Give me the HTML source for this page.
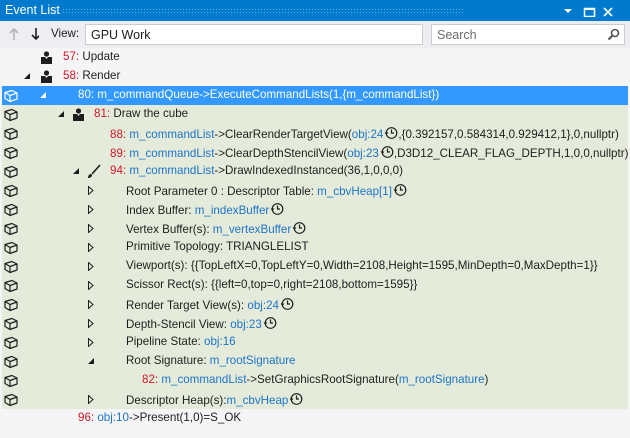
<!DOCTYPE html>
<html><head><meta charset="utf-8"><style>
*{margin:0;padding:0;box-sizing:border-box}
body{width:630px;height:438px;background:#f5f5f5;font-family:"Liberation Sans",sans-serif;font-size:11.6px;color:#1e1e1e;position:relative;overflow:hidden}
.title{position:absolute;left:0;top:0;width:630px;height:21px;background:#007acc;color:#fff;font-size:12.5px}
.title span{position:absolute;left:5px;top:3px}
.dots{position:absolute;left:62px;top:8px;width:402px;height:5px;background-image:radial-gradient(circle,#5aa9e0 0.7px,transparent 0.8px);background-size:3px 3px}
.tb{position:absolute;left:0;top:21px;width:630px;height:27px;background:#eeeef2}
.inp{position:absolute;top:3px;height:21px;background:#fff;border:1px solid #ccc;padding:3px 0 0 5px;font-size:12.5px}
.row{position:absolute;left:2px;width:626px;height:19px}
.g{background:#e4ebda}
.sel{background:#3399ff;color:#fff}
.t{position:absolute;top:2px;white-space:nowrap}
.r{color:#d0182a}.b{color:#1e74c8}
.cube{position:absolute;left:1px;top:3px}
.tri{position:absolute;top:6px;width:0;height:0;border-left:6px solid transparent;border-bottom:6px solid #1e1e1e}
.sel .tri{border-bottom-color:#fff}
.op{position:absolute;top:5px}
.per{position:absolute;top:3px}
.ck{display:inline-block;vertical-align:-2px;margin-left:1px}
</style></head><body>
<div class="title"><span>Event List</span><div class="dots"></div>
<svg style="position:absolute;left:561px;top:7px" width="60" height="10"><path d="M3 2h8l-4 4z" fill="#fff"/><rect x="23.5" y="1.5" width="10" height="8" fill="none" stroke="#fff" stroke-width="1.5"/><rect x="23" y="1" width="11" height="2" fill="#fff"/><path d="M43 1l8 8M51 1l-8 8" stroke="#fff" stroke-width="1.6"/></svg></div>
<div class="tb">
<svg style="position:absolute;left:9px;top:6px" width="30" height="14"><path d="M5 13V2M1 6l4-4 4 4" stroke="#b4b4b4" stroke-width="1.6" fill="none"/><path d="M27 1v11M23 8l4 4 4-4" stroke="#1e1e1e" stroke-width="1.6" fill="none"/></svg>
<span style="position:absolute;left:51px;top:6px">View:</span>
<div class="inp" style="left:85px;width:338px">GPU Work</div>
<div class="inp" style="left:431px;width:194px;color:#6d6d6d">Search
<svg style="position:absolute;right:4px;top:3px" width="13" height="13"><circle cx="8" cy="5" r="3.5" stroke="#555" stroke-width="1.6" fill="none"/><path d="M5.5 7.5L1.5 11.5" stroke="#555" stroke-width="2.2"/></svg></div>
</div>

<svg width="0" height="0" style="position:absolute"><defs>
<symbol id="cb" viewBox="0 0 15 14"><path d="M2 3.5L9 1.5L14 4V10L7 12.5L2 9.5Z M2 3.5L7 6.5L14 4 M7 6.5V12.5" fill="none" stroke="#1e1e1e" stroke-width="1.2" stroke-linejoin="round"/></symbol>
<symbol id="cw" viewBox="0 0 15 14"><path d="M2 3.5L9 1.5L14 4V10L7 12.5L2 9.5Z M2 3.5L7 6.5L14 4 M7 6.5V12.5" fill="none" stroke="#fff" stroke-width="1.2" stroke-linejoin="round"/></symbol>
<symbol id="pp" viewBox="0 0 11 13"><circle cx="5.5" cy="3" r="2.6" fill="#1e1e1e"/><path d="M0 6h4l1.5 2L7 6h4v7H0z" fill="#1e1e1e"/></symbol>
<symbol id="cl" viewBox="0 0 14 14"><circle cx="7.5" cy="7" r="5.3" fill="none" stroke="#1e1e1e" stroke-width="1.2"/><path d="M7.5 3.5V7H10" fill="none" stroke="#1e1e1e" stroke-width="1.2"/><path d="M0.5 6.5h4l-2 2.5z" fill="#1e1e1e"/></symbol>
</defs></svg>

<div class="row" style="top:48px"><svg class="per" style="left:39px" width="11" height="13"><use href="#pp"/></svg><span class="t" style="left:61px"><span class="r">57:</span> Update</span></div>
<div class="row" style="top:67px"><div class="tri" style="left:22px"></div><svg class="per" style="left:39px" width="11" height="13"><use href="#pp"/></svg><span class="t" style="left:61px"><span class="r">58:</span> Render</span></div>
<div class="row sel" style="top:86px"><svg class="cube" width="15" height="14"><use href="#cw"/></svg><div class="tri" style="left:38px"></div><span class="t" style="left:76px">80: m_commandQueue-&gt;ExecuteCommandLists(1,{m_commandList})</span></div>
<div class="row g" style="top:105px"><svg class="cube" width="15" height="14"><use href="#cb"/></svg><div class="tri" style="left:56px"></div><svg class="per" style="left:71px" width="11" height="13"><use href="#pp"/></svg><span class="t" style="left:92px"><span class="r">81:</span> Draw the cube</span></div>
<div class="row g" style="top:124px"><svg class="cube" width="15" height="14"><use href="#cb"/></svg><span class="t" style="left:108px"><span class="r">88:</span> <span class="b">m_commandList</span>-&gt;ClearRenderTargetView(<span class="b">obj:24</span><svg class="ck" width="14" height="14"><use href="#cl"/></svg>,{0.392157,0.584314,0.929412,1},0,nullptr)</span></div>
<div class="row g" style="top:143px"><svg class="cube" width="15" height="14"><use href="#cb"/></svg><span class="t" style="left:108px"><span class="r">89:</span> <span class="b">m_commandList</span>-&gt;ClearDepthStencilView(<span class="b">obj:23</span><svg class="ck" width="14" height="14"><use href="#cl"/></svg>,D3D12_CLEAR_FLAG_DEPTH,1,0,0,nullptr)</span></div>
<div class="row g" style="top:162px"><svg class="cube" width="15" height="14"><use href="#cb"/></svg><div class="tri" style="left:71px"></div><svg style="position:absolute;left:85px;top:2px" width="14" height="15"><path d="M13 1L5 10" stroke="#1e1e1e" stroke-width="1.6"/><path d="M4 10c-2 0-3 2-3 4 2 0 4-1 4-3z" fill="#1e1e1e"/></svg><span class="t" style="left:108px"><span class="r">94:</span> <span class="b">m_commandList</span>-&gt;DrawIndexedInstanced(36,1,0,0,0)</span></div>

<div class="row g" style="top:181px"><svg class="cube" width="15" height="14"><use href="#cb"/></svg><svg class="op" style="left:86px" width="6" height="9"><path d="M0.5 0.5L5 4.5L0.5 8.5Z" fill="none" stroke="#1e1e1e"/></svg><span class="t" style="left:124px">Root Parameter 0 : Descriptor Table: <span class="b">m_cbvHeap[1]</span><svg class="ck" width="14" height="14"><use href="#cl"/></svg></span></div>
<div class="row g" style="top:200px"><svg class="cube" width="15" height="14"><use href="#cb"/></svg><svg class="op" style="left:86px" width="6" height="9"><path d="M0.5 0.5L5 4.5L0.5 8.5Z" fill="none" stroke="#1e1e1e"/></svg><span class="t" style="left:124px">Index Buffer: <span class="b">m_indexBuffer</span><svg class="ck" width="14" height="14"><use href="#cl"/></svg></span></div>
<div class="row g" style="top:219px"><svg class="cube" width="15" height="14"><use href="#cb"/></svg><svg class="op" style="left:86px" width="6" height="9"><path d="M0.5 0.5L5 4.5L0.5 8.5Z" fill="none" stroke="#1e1e1e"/></svg><span class="t" style="left:124px">Vertex Buffer(s): <span class="b">m_vertexBuffer</span><svg class="ck" width="14" height="14"><use href="#cl"/></svg></span></div>
<div class="row g" style="top:238px"><svg class="cube" width="15" height="14"><use href="#cb"/></svg><svg class="op" style="left:86px" width="6" height="9"><path d="M0.5 0.5L5 4.5L0.5 8.5Z" fill="none" stroke="#1e1e1e"/></svg><span class="t" style="left:124px">Primitive Topology: TRIANGLELIST</span></div>
<div class="row g" style="top:257px"><svg class="cube" width="15" height="14"><use href="#cb"/></svg><svg class="op" style="left:86px" width="6" height="9"><path d="M0.5 0.5L5 4.5L0.5 8.5Z" fill="none" stroke="#1e1e1e"/></svg><span class="t" style="left:124px">Viewport(s): {{TopLeftX=0,TopLeftY=0,Width=2108,Height=1595,MinDepth=0,MaxDepth=1}}</span></div>
<div class="row g" style="top:276px"><svg class="cube" width="15" height="14"><use href="#cb"/></svg><svg class="op" style="left:86px" width="6" height="9"><path d="M0.5 0.5L5 4.5L0.5 8.5Z" fill="none" stroke="#1e1e1e"/></svg><span class="t" style="left:124px">Scissor Rect(s): {{left=0,top=0,right=2108,bottom=1595}}</span></div>
<div class="row g" style="top:295px"><svg class="cube" width="15" height="14"><use href="#cb"/></svg><svg class="op" style="left:86px" width="6" height="9"><path d="M0.5 0.5L5 4.5L0.5 8.5Z" fill="none" stroke="#1e1e1e"/></svg><span class="t" style="left:124px">Render Target View(s): <span class="b">obj:24</span><svg class="ck" width="14" height="14"><use href="#cl"/></svg></span></div>
<div class="row g" style="top:314px"><svg class="cube" width="15" height="14"><use href="#cb"/></svg><svg class="op" style="left:86px" width="6" height="9"><path d="M0.5 0.5L5 4.5L0.5 8.5Z" fill="none" stroke="#1e1e1e"/></svg><span class="t" style="left:124px">Depth-Stencil View: <span class="b">obj:23</span><svg class="ck" width="14" height="14"><use href="#cl"/></svg></span></div>
<div class="row g" style="top:333px"><svg class="cube" width="15" height="14"><use href="#cb"/></svg><svg class="op" style="left:86px" width="6" height="9"><path d="M0.5 0.5L5 4.5L0.5 8.5Z" fill="none" stroke="#1e1e1e"/></svg><span class="t" style="left:124px">Pipeline State: <span class="b">obj:16</span></span></div>
<div class="row g" style="top:352px"><svg class="cube" width="15" height="14"><use href="#cb"/></svg><div class="tri" style="left:86px"></div><span class="t" style="left:124px">Root Signature: <span class="b">m_rootSignature</span></span></div>
<div class="row g" style="top:371px"><svg class="cube" width="15" height="14"><use href="#cb"/></svg><span class="t" style="left:140px"><span class="r">82:</span> <span class="b">m_commandList</span>-&gt;SetGraphicsRootSignature(<span class="b">m_rootSignature</span>)</span></div>
<div class="row g" style="top:390px"><svg class="cube" width="15" height="14"><use href="#cb"/></svg><svg class="op" style="left:86px" width="6" height="9"><path d="M0.5 0.5L5 4.5L0.5 8.5Z" fill="none" stroke="#1e1e1e"/></svg><span class="t" style="left:124px">Descriptor Heap(s):<span class="b">m_cbvHeap</span><svg class="ck" width="14" height="14"><use href="#cl"/></svg></span></div>
<div class="row" style="top:409px"><span class="t" style="left:76px"><span class="r">96:</span> <span class="b">obj:10</span>-&gt;Present(1,0)=S_OK</span></div>
</body></html>
